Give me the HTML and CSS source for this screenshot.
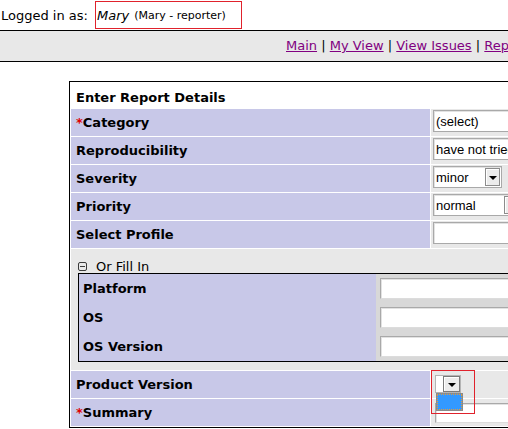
FILE: index.html
```html
<!DOCTYPE html>
<html>
<head>
<meta charset="utf-8">
<title>Report Issue</title>
<link rel="stylesheet" href="styles.css">
</head>
<body>
<div class="page">
  <div class="login-bar">
    <span class="login-label">Logged in as:</span>
    <span class="login-user"><em class="user-name">Mary</em> <span class="user-role">(Mary - reporter)</span></span>
  </div>

  <div class="menu">
    <a href="#">Main</a> | <a href="#">My View</a> | <a href="#">View Issues</a> | <a href="#">Report Issue</a> | <a href="#">Change Log</a> | <a href="#">Roadmap</a> | <a href="#">My Account</a> | <a href="#">Logout</a>
  </div>

  <table class="report-form">
    <colgroup>
      <col class="col-label">
      <col class="col-value">
    </colgroup>
    <tr>
      <td class="form-title" colspan="2">Enter Report Details</td>
    </tr>
    <tr>
      <td class="category"><span class="required">*</span>Category</td>
      <td class="value"><span class="select select-wide"><span class="select-text">(select)</span><span class="select-btn"><span class="arrow"></span></span></span></td>
    </tr>
    <tr>
      <td class="category">Reproducibility</td>
      <td class="value"><span class="select select-wide"><span class="select-text">have not tried</span><span class="select-btn"><span class="arrow"></span></span></span></td>
    </tr>
    <tr>
      <td class="category">Severity</td>
      <td class="value"><span class="select select-severity"><span class="select-text">minor</span><span class="select-btn"><span class="arrow"></span></span></span></td>
    </tr>
    <tr>
      <td class="category">Priority</td>
      <td class="value"><span class="select select-priority"><span class="select-text">normal</span><span class="select-btn"><span class="arrow"></span></span></span></td>
    </tr>
    <tr>
      <td class="category">Select Profile</td>
      <td class="value"><span class="select select-wide"><span class="select-text"></span><span class="select-btn"><span class="arrow"></span></span></span></td>
    </tr>
    <tr>
      <td class="fill-in" colspan="2">
        <div class="toggle">
          <svg class="toggle-icon" width="9" height="9" viewBox="0 0 9 9"><rect x="0.5" y="0.5" width="8" height="8" rx="1.5" fill="none" stroke="#3a3a3a"/><line x1="2" y1="4.5" x2="7" y2="4.5" stroke="#3a3a3a"/></svg>
          <span>Or Fill In</span>
        </div>
        <table class="profile-table">
          <colgroup>
            <col class="col-inner-label">
            <col class="col-inner-value">
          </colgroup>
          <tr>
            <td class="inner-label">Platform</td>
            <td class="inner-value"><span class="text-input inner-input"></span></td>
          </tr>
          <tr>
            <td class="inner-label">OS</td>
            <td class="inner-value"><span class="text-input inner-input"></span></td>
          </tr>
          <tr>
            <td class="inner-label">OS Version</td>
            <td class="inner-value"><span class="text-input inner-input"></span></td>
          </tr>
        </table>
      </td>
    </tr>
    <tr>
      <td class="category">Product Version</td>
      <td class="value value-loose">
        <span class="version-wrap">
          <span class="select select-tiny"><span class="select-text"></span><span class="select-btn"><span class="arrow"></span></span></span>
          <span class="dropdown-list"></span>
          <span class="annotation"></span>
        </span>
      </td>
    </tr>
    <tr>
      <td class="category"><span class="required">*</span>Summary</td>
      <td class="value value-loose"><span class="text-input summary-input"></span></td>
    </tr>
  </table>
</div>
</body>
</html>
```

FILE: styles.css
```css
html {
  overflow: hidden;
}

body {
  margin: 0;
  font-family: "DejaVu Sans", Verdana, sans-serif;
  font-size: 13px;
  line-height: 15px;
  color: #000;
  background: #fff;
}

.page {
  width: 1000px;
}

/* Logged in bar */
.login-bar {
  height: 30px;
  display: flex;
  align-items: center;
  padding-left: 1px;
}

.login-label {
  margin-right: 7px;
}

.login-user {
  display: inline-flex;
  align-items: center;
  box-sizing: border-box;
  height: 28px;
  width: 147px;
  padding: 0 0 0 1px;
  border: 1px solid #e0222c;
}

.user-name {
  font-style: italic;
  margin-right: 5px;
}

.user-role {
  font-size: 11px;
}

/* Menu */
.menu {
  background: #e8e8e8;
  border-top: 1px solid #000;
  border-bottom: 1px solid #000;
  padding: 7px 0 8px 286px;
  white-space: nowrap;
}

.menu a {
  color: #800080;
  text-decoration: underline;
}

/* Main form table */
.report-form {
  margin: 19px 0 0 69px;
  width: 900px;
  table-layout: fixed;
  border: 1px solid #000;
  border-collapse: separate;
  border-spacing: 1px;
  background: #fff;
}

.col-label {
  width: 359px;
}

.report-form td {
  box-sizing: border-box;
  padding: 0;
}

.report-form td.form-title {
  height: 25px;
  padding: 0 5px 3px;
  vertical-align: bottom;
  font-weight: bold;
  background: #fff;
}

.report-form td.category {
  height: 27px;
  padding: 0 5px;
  vertical-align: middle;
  font-weight: bold;
  background: #c8c8e8;
  white-space: nowrap;
}

.required {
  color: #e00000;
}

.report-form td.value {
  background: #e8e8e8;
  padding: 1px 2px 3px;
  vertical-align: top;
}

.report-form td.value-loose {
  padding: 4px 4px 3px;
}

/* Select controls */
.select {
  display: flex;
  align-items: center;
  box-sizing: border-box;
  height: 22px;
  background: #fff;
  border: 1px solid #a9a9a9;
  box-shadow: inset 1px 1px 0 #e2e2e2;
  font-family: "Liberation Sans", Arial, sans-serif;
  font-size: 13px;
}

.select-text {
  flex: 1;
  padding-left: 2px;
  white-space: nowrap;
  overflow: hidden;
}

.select-btn {
  box-sizing: border-box;
  width: 15px;
  height: 18px;
  margin-right: 1px;
  border: 1px solid #8c8c8c;
  background: #ececec;
  box-shadow: inset 1px 1px 0 #fff;
  display: flex;
  align-items: center;
  justify-content: center;
}

.arrow {
  width: 0;
  height: 0;
  border-left: 4px solid transparent;
  border-right: 4px solid transparent;
  border-top: 4px solid #000;
  margin-top: 1px;
}

.select-wide {
  width: 260px;
}

.select-severity {
  width: 69px;
}

.select-priority {
  width: 88px;
}

.version-wrap {
  position: relative;
  display: block;
  width: 26px;
}

.select-tiny {
  width: 26px;
  height: 18px;
  box-shadow: none;
  border-color: #b4b4b4;
}

.select-tiny .select-text {
  padding: 0;
}

.select-tiny .select-btn {
  width: 17px;
  height: 16px;
  margin: 0;
  border-color: #7a7a7a;
}

.dropdown-list {
  position: absolute;
  left: 1px;
  top: 18px;
  width: 27px;
  height: 18px;
  box-sizing: border-box;
  border: 1px solid #8a8a8a;
  background: #3399ff;
}

.dropdown-list::after {
  content: "";
  position: absolute;
  left: 0;
  top: 0;
  right: 0;
  bottom: 0;
  border: 1px dotted #e39a3c;
}

.annotation {
  position: absolute;
  left: -4px;
  top: -5px;
  width: 44px;
  height: 44px;
  box-sizing: border-box;
  border: 1px solid #e0222c;
}

/* Text inputs */
.text-input {
  display: block;
  box-sizing: border-box;
  height: 21px;
  background: #fff;
  border: 1px solid #a9a9a9;
  border-right-color: #dcdcdc;
  border-bottom-color: #dcdcdc;
  box-shadow: inset 1px 1px 0 #e2e2e2;
}

.summary-input {
  width: 600px;
  height: 20px;
}

/* Or fill in */
.report-form td.fill-in {
  background: #e8e8e8;
  padding: 8px 7px 8px;
}

.toggle {
  display: flex;
  align-items: center;
  box-sizing: border-box;
  height: 16px;
  padding-top: 2px;
}

.toggle-icon {
  margin-right: 9px;
  flex: none;
}

.profile-table {
  width: 820px;
  table-layout: fixed;
  border: 1px solid #000;
  border-collapse: separate;
  border-spacing: 0;
}

.col-inner-label {
  width: 297px;
}

.profile-table td.inner-label {
  height: 29px;
  padding: 0 4px;
  background: #c8c8e8;
  font-weight: bold;
  vertical-align: middle;
}

.profile-table td.inner-value {
  background: #d8d8d8;
  padding: 4px 4px 4px;
  vertical-align: top;
}

.inner-input {
  width: 460px;
}
```
